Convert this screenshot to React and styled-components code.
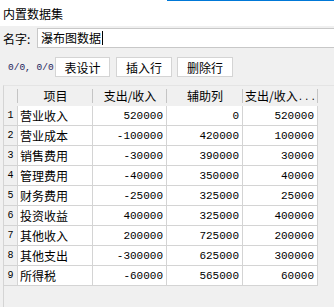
import React from "react";
import styled, { createGlobalStyle } from "styled-components";

const GlobalStyle = createGlobalStyle`
  html, body {
    margin: 0;
    padding: 0;
    background: #f0f0f0;
    font-family: "Noto Sans CJK SC", "Liberation Sans", sans-serif;
    color: #000;
  }
  #root {
    height: 307px;
  }
`;

const Page = styled.div`
  display: flex;
  flex-direction: column;
  width: 334px;
  height: 307px;
  overflow: hidden;
`;

const TopLine = styled.div`
  height: 1px;
  background: #fff;
  padding-left: 167px;
  &::after {
    content: "";
    display: block;
    height: 1px;
    background: #0078d7;
  }
`;

const TitleBar = styled.div`
  height: 25px;
  background: #fff;
  padding-left: 3px;
  font-size: 12px;
  line-height: 25px;
`;

const NameRow = styled.div`
  display: flex;
  align-items: center;
  margin-top: 2px;
  height: 20px;
`;

const Label = styled.span`
  width: 34px;
  padding-left: 3px;
  font-size: 12px;
`;

const NameInput = styled.div`
  flex: 1;
  height: 18px;
  background: #fff;
  border: 1px solid #c8c8c8;
  border-right: none;
  padding-left: 3px;
  font-size: 12px;
  line-height: 18px;
  display: flex;
  align-items: center;
`;

const Caret = styled.span`
  display: inline-block;
  width: 1px;
  height: 14px;
  background: #000;
  margin-left: 1px;
`;

const Toolbar = styled.div`
  display: flex;
  align-items: center;
  margin-top: 9px;
  height: 20px;
  padding-left: 8px;
`;

const Counter = styled.span`
  width: 47px;
  font-family: "Liberation Mono", monospace;
  font-size: 9.5px;
  color: #1c1c5c;
`;

const Button = styled.button`
  width: ${(p) => p.$w || 56}px;
  height: 20px;
  margin-right: ${(p) => p.$gap || 5}px;
  padding: 0;
  background: #fff;
  border: 1px solid #d4d4d4;
  font-family: inherit;
  font-size: 12px;
  color: #000;
`;

const GridArea = styled.div`
  flex: 1;
  margin-top: 8px;
  margin-left: 3px;
  border-left: 1px solid #d4d4d4;
  border-top: 1px solid #e4e4e4;
`;

const Table = styled.div`
  display: grid;
  grid-template-columns: 14px 75px 74px 76px 75px;
  grid-auto-rows: 20px;
`;

const HeadCell = styled.div`
  position: relative;
  height: 19px;
  display: flex;
  align-items: center;
  justify-content: ${(p) => (p.$left ? "flex-start" : "center")};
  padding-left: ${(p) => (p.$left ? 2 : 0)}px;
  font-size: 12px;
  background: #f0f0f0;
  white-space: nowrap;
  overflow: hidden;
  &::after {
    content: "";
    position: absolute;
    right: 0;
    top: 3px;
    bottom: 2px;
    width: 1px;
    background: #c4c4c4;
  }
`;

const Dots = styled.span`
  font-family: "Liberation Mono", monospace;
  font-size: 9px;
  letter-spacing: 1px;
  margin-top: 4px;
`;

const NumCell = styled.div`
  display: flex;
  align-items: center;
  justify-content: center;
  background: #f0f0f0;
  border-right: 1px solid #d4d4d4;
  border-bottom: 1px solid #d4d4d4;
  font-family: "Liberation Mono", monospace;
  font-size: 10px;
`;

const Cell = styled.div`
  display: flex;
  align-items: center;
  justify-content: ${(p) => (p.$num ? "flex-end" : "flex-start")};
  padding: 0 3px 0 2px;
  background: #fff;
  border-right: 1px solid #d4d4d4;
  border-bottom: 1px solid #d4d4d4;
  font-family: ${(p) =>
    p.$num ? '"Liberation Mono", monospace' : "inherit"};
  font-size: ${(p) => (p.$num ? 11 : 12)}px;
`;

const rows = [
  ["营业收入", 520000, 0, 520000],
  ["营业成本", -100000, 420000, 100000],
  ["销售费用", -30000, 390000, 30000],
  ["管理费用", -40000, 350000, 40000],
  ["财务费用", -25000, 325000, 25000],
  ["投资收益", 400000, 325000, 400000],
  ["其他收入", 200000, 725000, 200000],
  ["其他支出", -300000, 625000, 300000],
  ["所得税", -60000, 565000, 60000],
];

export default function App() {
  return (
    <Page>
      <GlobalStyle />
      <TopLine />
      <TitleBar>内置数据集</TitleBar>
      <NameRow>
        <Label>名字:</Label>
        <NameInput>
          瀑布图数据
          <Caret />
        </NameInput>
      </NameRow>
      <Toolbar>
        <Counter>0/0, 0/0</Counter>
        <Button $w={55} $gap={6}>表设计</Button>
        <Button $w={56} $gap={5}>插入行</Button>
        <Button $w={56}>删除行</Button>
      </Toolbar>
      <GridArea>
        <Table>
          <HeadCell />
          <HeadCell>项目</HeadCell>
          <HeadCell>支出/收入</HeadCell>
          <HeadCell>辅助列</HeadCell>
          <HeadCell $left>
            支出/收入<Dots>...</Dots>
          </HeadCell>
          {rows.map((r, i) => (
            <React.Fragment key={i}>
              <NumCell>{i + 1}</NumCell>
              <Cell>{r[0]}</Cell>
              <Cell $num>{r[1]}</Cell>
              <Cell $num>{r[2]}</Cell>
              <Cell $num>{r[3]}</Cell>
            </React.Fragment>
          ))}
        </Table>
      </GridArea>
    </Page>
  );
}
